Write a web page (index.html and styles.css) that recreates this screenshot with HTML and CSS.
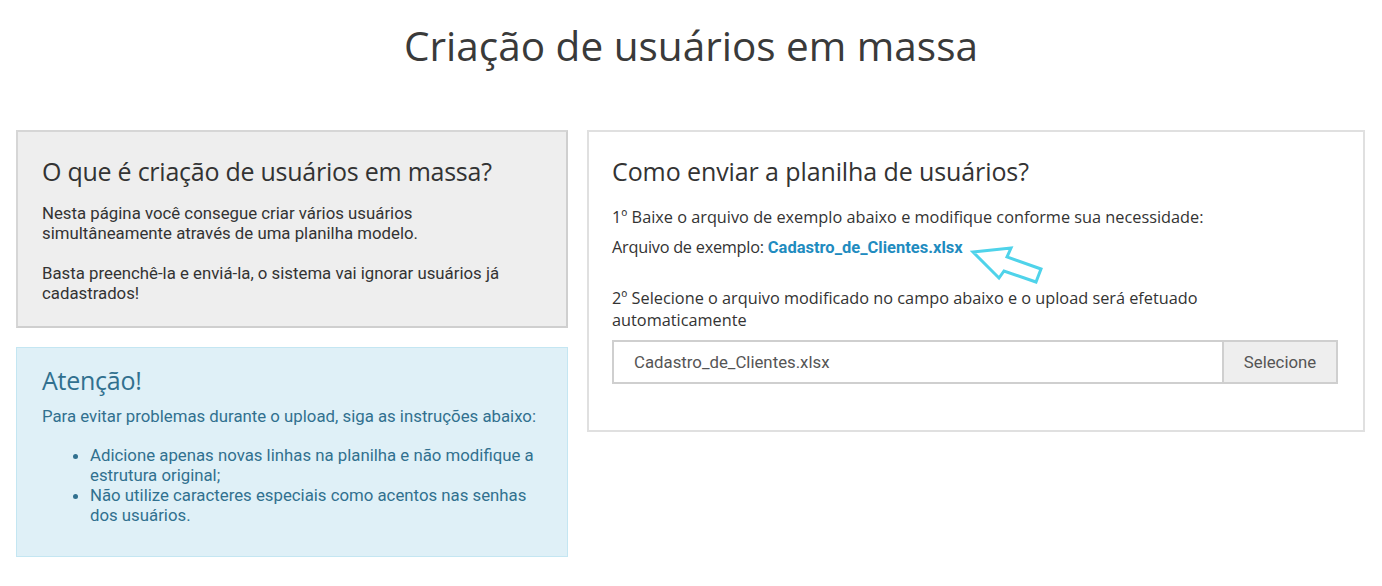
FILE: index.html
```html
<!DOCTYPE html>
<html lang="pt-BR">
<head>
<meta charset="utf-8">
<title>Criação de usuários em massa</title>
<link rel="stylesheet" href="styles.css">
</head>
<body>
<h1 class="page-title">Criação de usuários em massa</h1>
<div class="layout">
  <div class="col-left">
    <section class="panel panel-gray">
      <h2 class="panel-title">O que é criação de usuários em massa?</h2>
      <p class="txt">Nesta página você consegue criar vários usuários<br>simultâneamente através de uma planilha modelo.</p>
      <p class="txt gap">Basta preenchê-la e enviá-la, o sistema vai ignorar usuários já cadastrados!</p>
    </section>
    <section class="panel panel-info">
      <h2 class="panel-title info-title">Atenção!</h2>
      <p class="txt">Para evitar problemas durante o upload, siga as instruções abaixo:</p>
      <ul class="info-list">
        <li>Adicione apenas novas linhas na planilha e não modifique a estrutura original;</li>
        <li>Não utilize caracteres especiais como acentos nas senhas dos usuários.</li>
      </ul>
    </section>
  </div>
  <section class="panel panel-white">
    <h2 class="panel-title right-title">Como enviar a planilha de usuários?</h2>
    <p class="step">1º Baixe o arquivo de exemplo abaixo e modifique conforme sua necessidade:</p>
    <p class="step example">Arquivo de exemplo: <a class="file-link" href="#">Cadastro_de_Clientes.xlsx</a><svg class="arrow" width="85" height="50" viewBox="0 0 85 50"><polygon points="8,13 46,9 42,18 76,30 71,43 39,32 34,39" fill="none" stroke="#4fd3ea" stroke-width="3" stroke-linejoin="miter"/></svg></p>
    <p class="step step2">2º Selecione o arquivo modificado no campo abaixo e o upload será efetuado automaticamente</p>
    <div class="file-input">
      <span class="file-name">Cadastro_de_Clientes.xlsx</span>
      <span class="file-btn">Selecione</span>
    </div>
  </section>
</div>
</body>
</html>
```
FILE: styles.css
```css
html, body {
  margin: 0;
  padding: 0;
  background: #ffffff;
}
body {
  font-family: Roboto, "Liberation Sans", sans-serif;
  color: #333333;
}
.page-title {
  margin: 0;
  padding-top: 20px;
  height: 110px;
  box-sizing: border-box;
  text-align: center;
  font-family: "Open Sans", "Noto Sans", sans-serif;
  font-weight: 400;
  font-size: 40.5px;
  line-height: 52px;
  color: #3a3a3a;
  letter-spacing: 0;
}
.layout {
  display: flex;
  align-items: flex-start;
  gap: 19px;
  padding: 20px 17px 0 16px;
}
.col-left {
  width: 552px;
  flex: none;
  display: flex;
  flex-direction: column;
  gap: 19px;
}
.panel {
  box-sizing: border-box;
}
.panel-gray {
  background: #eeeeee;
  border: 2px solid #d6d6d6;
  border-right-color: #cfcfcf;
  border-bottom-color: #cfcfcf;
  padding: 23px 24px 26px 24px;
  height: 198px;
}
.panel-info {
  background: #dff0f7;
  border: 1px solid #c4e6f2;
  padding: 16px 25px 20px 25px;
  height: 210px;
  color: #31708f;
}
.panel-white {
  flex: 1;
  background: #fff;
  border: 2px solid #e0e0e0;
  padding: 23px 25px 46px 23px;
  height: 302px;
}
.panel-title {
  margin: 0 0 16px 0;
  font-family: "Open Sans", "Noto Sans", sans-serif;
  font-weight: 400;
  font-size: 25px;
  line-height: 32px;
  letter-spacing: -0.25px;
  color: #333333;
}
.info-title {
  color: #31708f;
  margin-bottom: 10px;
}
.right-title {
  letter-spacing: -0.1px;
  margin-bottom: 19px;
}
.txt {
  margin: 0;
  font-size: 16.8px;
  line-height: 20px;
}
.txt.gap {
  margin-top: 20px;
}
.info-list {
  margin: 19px 0 0 0;
  padding-left: 48px;
  font-size: 16.8px;
  line-height: 20px;
}
.step {
  margin: 0;
  font-family: "Open Sans", "Noto Sans", sans-serif;
  font-size: 16.3px;
  line-height: 22px;
  letter-spacing: 0;
  color: #333;
}
.step.example {
  margin-top: 8px;
  position: relative;
  letter-spacing: -0.25px;
}
.file-link {
  font-family: Roboto, "Liberation Sans", sans-serif;
  font-weight: 700;
  font-size: 16.5px;
  letter-spacing: 0;
  color: #1f8cc0;
  text-decoration: none;
}
.arrow {
  position: absolute;
  left: 353px;
  top: 3px;
}
.step2 {
  margin-top: 28px;
  max-width: 680px;
}
.file-input {
  margin-top: 9px;
  display: flex;
  height: 44px;
  border: 2px solid #cfcfcf;
  box-sizing: border-box;
}
.file-name {
  flex: 1;
  display: flex;
  align-items: center;
  padding-left: 20px;
  font-size: 16.8px;
  color: #555;
}
.file-btn {
  width: 112px;
  display: flex;
  align-items: center;
  justify-content: center;
  background: #eeeeee;
  border-left: 2px solid #cfcfcf;
  font-size: 16.8px;
  color: #555;
}
```
